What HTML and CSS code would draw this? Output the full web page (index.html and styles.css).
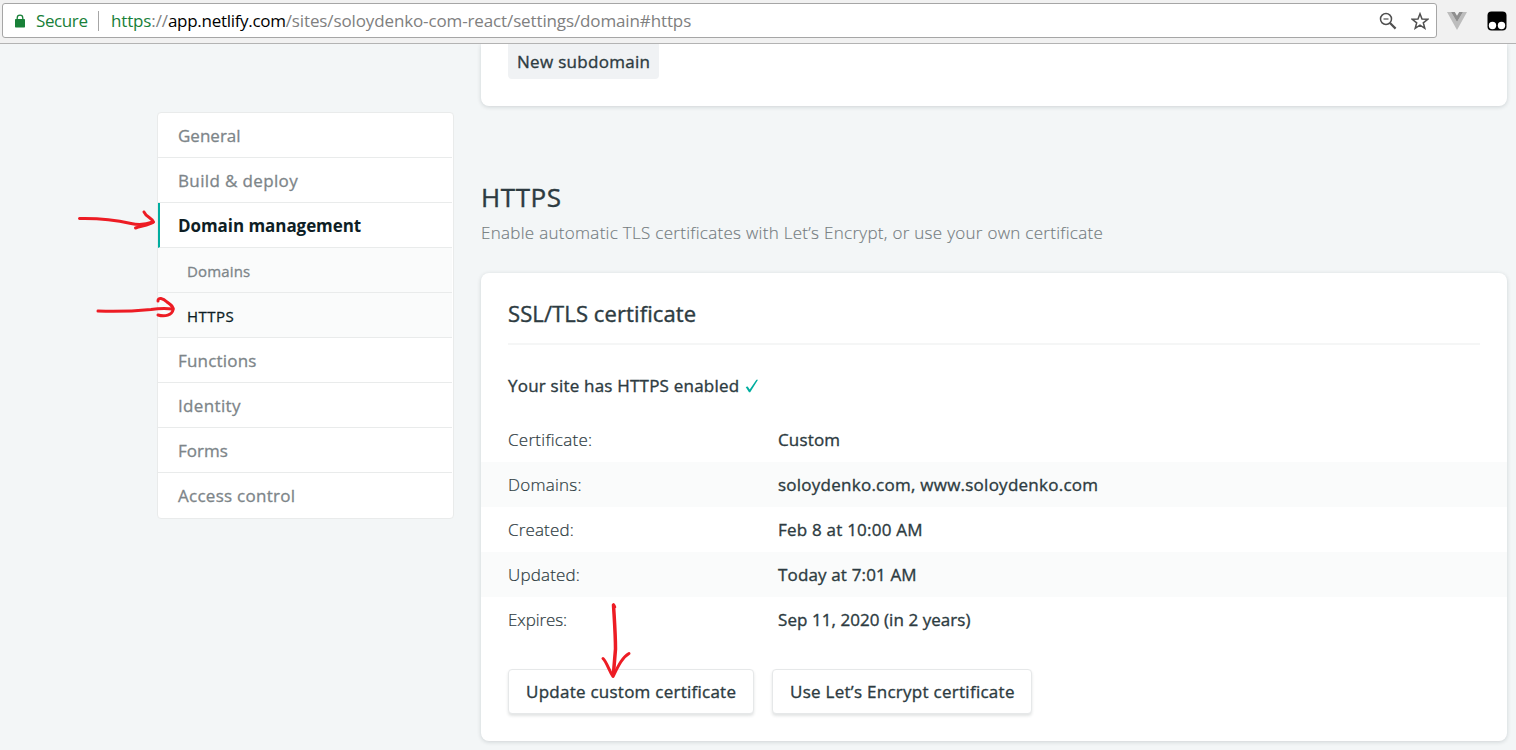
FILE: index.html
```html
<!DOCTYPE html>
<html lang="en">
<head>
<meta charset="utf-8">
<title>Domain settings</title>
<link rel="stylesheet" href="styles.css">
</head>
<body>
<header class="toolbar">
  <div class="address">
    <svg class="lock" width="10" height="14" viewBox="0 0 10 14"><path d="M2.2 6V3.9a2.8 2.8 0 0 1 5.600 0V6" fill="none" stroke="#188038" stroke-width="1.3"/><rect x="0" y="5" width="10" height="8.500" rx="0.700" fill="#188038"/></svg>
    <span class="secure">Secure</span>
    <span class="divider"></span>
    <div class="url"><span class="scheme">https</span><span class="slashes">://</span><span class="host">app.netlify.com</span><span class="path">/sites/soloydenko-com-react/settings/domain#https</span></div>
    <svg class="magnifier" width="18" height="18" viewBox="0 0 18 18" fill="none" stroke="#505050"><circle cx="7" cy="7" r="5.500" stroke-width="1.500"/><path d="M4.500 7h5" stroke-width="1.200"/><path d="M11 11l5.600 5.600" stroke-width="2.200"/></svg>
    <svg class="star" width="18" height="18" viewBox="0 0 18 18"><path d="M9 1.800l2 5.200 5.700.3-4.400 3.500 1.500 5.500L9 13.200l-4.800 3.100 1.500-5.500L1.300 7.300 7 7z" fill="none" stroke="#505050" stroke-width="1.500"/></svg>
  </div>
  <svg class="vue" width="20" height="18" viewBox="0 0 20 18"><path d="M0 0h4l6 10 6-10h4L10 18z" fill="#bdbdbd"/><path d="M4 0h3.800L10 3.800 12.200 0H16l-6 10z" fill="#8f8f8f"/></svg>
  <svg class="monkey" width="20" height="20" viewBox="0 0 20 20"><rect x="0.500" y="0.500" width="19" height="19" rx="4" fill="#000"/><circle cx="5.500" cy="14.500" r="3.700" fill="#fff"/><circle cx="14.500" cy="14.500" r="3.700" fill="#fff"/></svg>
</header>
<div class="page">
  <nav class="sidebar">
    <a class="item"><span class="t-general">General</span></a>
    <a class="item"><span class="t-build">Build &amp; deploy</span></a>
    <a class="item active"><span class="t-domain">Domain management</span></a>
    <a class="item sub"><span class="t-domains">Domains</span></a>
    <a class="item sub current"><span class="t-https">HTTPS</span></a>
    <a class="item"><span class="t-functions">Functions</span></a>
    <a class="item"><span class="t-identity">Identity</span></a>
    <a class="item"><span class="t-forms">Forms</span></a>
    <a class="item"><span class="t-access">Access control</span></a>
  </nav>
  <main class="main">
    <section class="card card-top"><button class="chip"><span class="t-new">New subdomain</span></button></section>
    <h1 class="title"><span class="t-title">HTTPS</span></h1>
    <p class="subtitle"><span class="t-subtitle">Enable automatic TLS certificates with Let’s Encrypt, or use your own certificate</span></p>
    <section class="card card-cert">
      <h2 class="card-title"><span class="t-ssl">SSL/TLS certificate</span></h2>
      <div class="status"><span class="t-status">Your site has HTTPS enabled</span><svg class="check" width="14" height="14" viewBox="0 0 14 14"><path d="M.7 8.100l2-.7 2 3.200L11.400.8H13L5.200 13.200H4z" fill="#00ad9f"/></svg></div>
      <dl class="details">
        <div class="row"><dt class="t-cert">Certificate:</dt><dd class="t-custom">Custom</dd></div>
        <div class="row"><dt class="t-doms">Domains:</dt><dd class="t-hosts">soloydenko.com, www.soloydenko.com</dd></div>
        <div class="row"><dt class="t-created">Created:</dt><dd class="t-feb">Feb 8 at 10:00 AM</dd></div>
        <div class="row"><dt class="t-updated">Updated:</dt><dd class="t-today">Today at 7:01 AM</dd></div>
        <div class="row"><dt class="t-expires">Expires:</dt><dd class="t-sep">Sep 11, 2020 (in 2 years)</dd></div>
      </dl>
      <div class="actions">
        <button class="button update"><span class="t-update">Update custom certificate</span></button>
        <button class="button encrypt"><span class="t-encrypt">Use Let’s Encrypt certificate</span></button>
      </div>
    </section>
  </main>
</div>
<svg class="arrows" width="1516" height="750" viewBox="0 0 1516 750" fill="none" stroke="#ed1c24" stroke-width="3" stroke-linecap="round" stroke-linejoin="round">
  <path d="M79.500 218.500C101 218 120 221 131 223.500Q142 226 153 222"/>
  <path d="M144 212c2 5 8 6 9.500 10-4 3-13 4-18 6"/>
  <path d="M98 311C119 312 135 311 151 309.500Q162 308 173 309"/>
  <path d="M158 301c0-4 5-3 9 1 4 3 7 5 6 8-1 5-8 7-15 5"/>
  <path d="M613.500 605l1 2M613.500 605c1 17 2 30 2 44l-2 24" stroke-width="3.500"/>
  <path d="M603 658.500c4 4 6 12 10 18 5-10 9-19 16-23"/>
</svg>
</body>
</html>
```
FILE: styles.css
```css
* { box-sizing: border-box; }
body { margin: 0; width: 1516px; height: 750px; overflow: hidden; background: #f3f6f7; color: #2d3b41; font-family: "Open Sans", "Noto Sans", sans-serif; font-size: 17px; }
h1, h2, p, dl, dd { margin: 0; }
span, dt, dd { white-space: nowrap; }
button { font: inherit; color: inherit; }
svg { flex: none; }

.toolbar { display: flex; height: 44px; padding: 3px 0 0 2px; background: #f1f1f1; border-bottom: 1px solid #b3b3b3; }
.address { display: flex; align-items: center; width: 1435px; height: 35px; padding-left: 12px; background: #fff; border: 1px solid #a6a6a6; border-radius: 3px; }
.secure { width: 62px; margin-left: 11px; color: #188038; letter-spacing: -.4px; }
.divider { width: 1px; height: 20px; background: #a6a6a6; }
.url { display: flex; width: 1268px; margin-left: 12px; color: #808080; }
.scheme { color: #188038; letter-spacing: -.15px; }
.slashes { letter-spacing: -.1px; }
.host { color: #000; letter-spacing: -.29px; }
.path { letter-spacing: -.125px; }
.star { margin-left: 14px; }
.vue { margin: 9px 0 0 10px; }
.monkey { margin: 8px 0 0 20px; }

.page { display: flex; height: 706px; overflow: hidden; }
.sidebar { width: 297px; height: 407px; margin: 68px 0 0 157px; background: #fff; border: 1px solid #e9ebeb; border-radius: 4px; }
.item { display: flex; align-items: center; height: 45px; margin-right: 1px; padding-left: 20px; border-bottom: 1px solid #e9ebeb; color: #7d8589; -webkit-text-stroke: .3px; }
.item:last-child { border-bottom: 0; }
.active { padding-left: 18px; border-left: 2px solid #00ad9f; color: #0e1e25; font-weight: 700; -webkit-text-stroke: 0; }
.sub { padding: 2px 0 0 29px; background: #fafbfb; font-size: 15px; }
.current { color: #0e1e25; }

.main { width: 1026px; margin-left: 27px; }
.card { background: #fff; border-radius: 8px; box-shadow: 0 1px 4px rgba(14, 30, 37, .16); }
.card-top { height: 62px; padding-left: 27px; border-radius: 0 0 8px 8px; }
.chip { width: 151px; height: 35px; padding: 0 0 0 9px; border: 0; border-radius: 0 0 4px 4px; background: #f0f2f4; text-align: left; -webkit-text-stroke: .35px; }
.title { height: 38px; margin-top: 72px; font-size: 26px; font-weight: 400; line-height: 38px; -webkit-text-stroke: .4px; }
.subtitle { height: 28px; margin-top: 3px; color: #737c80; font-weight: 300; line-height: 27px; -webkit-text-stroke: .15px; }
.card-cert { height: 468px; margin-top: 26px; }
.card-title { height: 72px; margin: 0 27px; padding-top: 23px; border-bottom: 2px solid #f5f6f6; font-size: 22px; font-weight: 400; line-height: 34px; -webkit-text-stroke: .4px; }
.status { display: flex; align-items: center; height: 72px; padding: 9px 27px 0; -webkit-text-stroke: .35px; }
.check { margin-left: 6px; }
.row { display: flex; align-items: center; height: 45px; padding-left: 27px; }
.row:nth-child(even) { background: #fafbfb; }
.row dt { width: 270px; font-weight: 300; -webkit-text-stroke: .2px; }
.row dd { -webkit-text-stroke: .35px; }
.actions { display: flex; gap: 18px; padding: 27px 27px 0; }
.button { height: 45px; padding: 0 0 0 17px; border: 1px solid #e6e8e9; border-radius: 4px; background: #fff; box-shadow: 0 2px 3px rgba(14, 30, 37, .12); text-align: left; -webkit-text-stroke: .35px; }
.update { width: 246px; }
.encrypt { width: 260px; }

/* Tracking per label */
.t-new { letter-spacing: .3px; }
.t-build { letter-spacing: .36px; }
.t-domain { letter-spacing: -.06px; }
.t-domains { letter-spacing: .15px; }
.t-https { letter-spacing: .5px; }
.t-functions { letter-spacing: .2px; }
.t-identity { letter-spacing: .35px; }
.t-access { letter-spacing: .27px; }
.t-title { letter-spacing: .6px; }
.t-subtitle { letter-spacing: .29px; }
.t-ssl { letter-spacing: .1px; }
.t-status { letter-spacing: .21px; }
.t-cert { letter-spacing: .27px; }
.t-doms { letter-spacing: .25px; }
.t-created { letter-spacing: .15px; }
.t-updated { letter-spacing: .18px; }
.t-expires { letter-spacing: -.08px; }
.t-custom { letter-spacing: .15px; }
.t-hosts { letter-spacing: .25px; }
.t-feb { letter-spacing: .22px; }
.t-today { letter-spacing: .15px; }
.t-sep { letter-spacing: .06px; }
.t-update { letter-spacing: .25px; }
.t-encrypt { letter-spacing: .27px; }

.arrows { position: absolute; left: 0; top: 0; pointer-events: none; }
```
